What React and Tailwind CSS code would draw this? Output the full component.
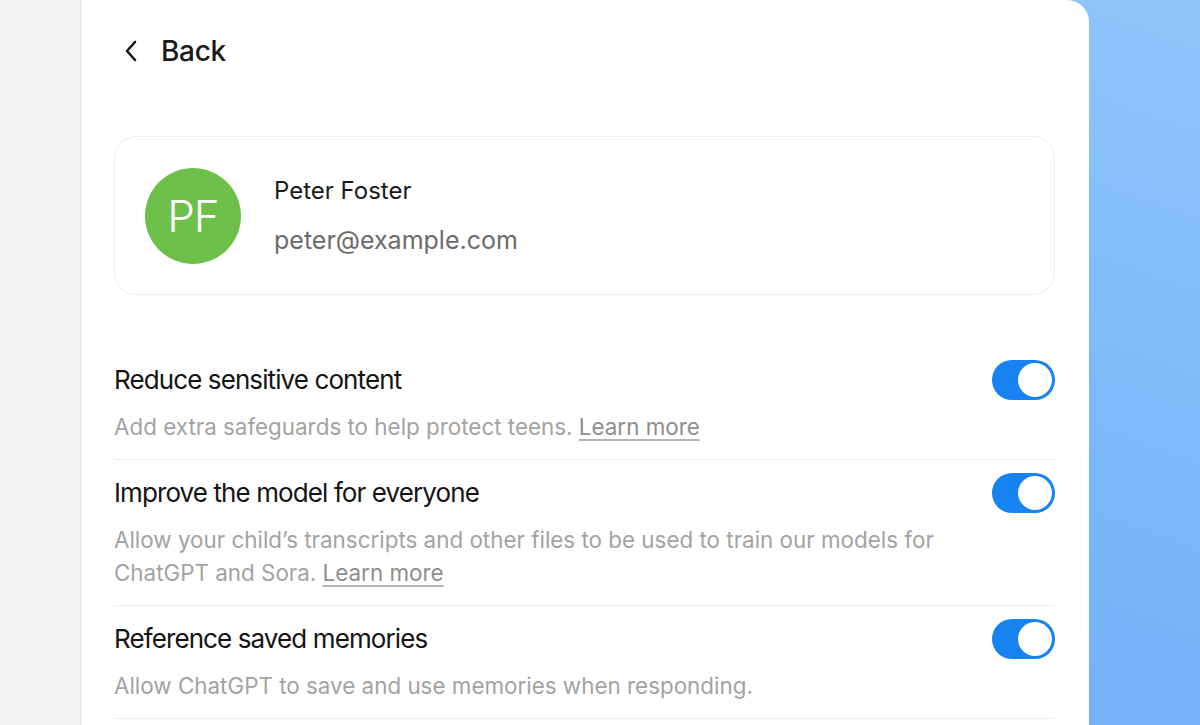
import React from "react";

function Toggle() {
  return (
    <div className="w-[63px] h-[40px] rounded-full bg-[#1683f0] p-[3px] flex justify-end shrink-0">
      <div className="w-[34px] h-[34px] rounded-full bg-white" />
    </div>
  );
}

function Row({ title, children }) {
  return (
    <div className="flex flex-col border-b border-[#ececec] pt-[13px] pb-[16px]">
      <div className="flex items-center justify-between">
        <div className="text-[26px] leading-[32px] text-[#141414] tracking-[-0.9px]">{title}</div>
        <Toggle />
      </div>
      <div className="mt-[10px] text-[22.4px] leading-[33px] text-[#a3a3a3] pr-[100px]">{children}</div>
    </div>
  );
}

function LearnMore() {
  return (
    <span className="text-[#8e8e8e] underline decoration-[#b5b5b5] decoration-[1.5px] underline-offset-[4px]">Learn more</span>
  );
}

export default function App() {
  return (
    <div
      className="w-[1200px] h-[725px] flex overflow-hidden bg-[linear-gradient(200deg,#8fc6fb_0%,#78b6f8_50%,#6fa6ee_100%)]"
      style={{ fontFamily: "Inter, 'Liberation Sans', sans-serif" }}
    >
      <div className="w-[81px] shrink-0 bg-[#f3f3f3] border-r border-[#e6e6e6]" />
      <div className="w-[1008px] shrink-0 bg-white rounded-tr-[22px] pl-[33px] pr-[34px] flex flex-col">
        <div className="flex items-center h-[40px] mt-[31px] pl-[9px]">
          <svg width="16" height="22" viewBox="0 0 16 22" fill="none" className="shrink-0">
            <path d="M12 2 L4 11 L12 20" stroke="#1a1a1a" strokeWidth="2.6" strokeLinecap="round" strokeLinejoin="round" />
          </svg>
          <span className="ml-[22px] text-[28px] font-medium text-[#1a1a1a] tracking-[-0.3px]">Back</span>
        </div>
        <div className="mt-[65px] h-[159px] rounded-[22px] border border-[#ececec] flex items-center pl-[30px]">
          <div className="w-[96px] h-[96px] rounded-full bg-[#6cc04a] flex items-center justify-center shrink-0">
            <span className="text-white text-[44px] font-light tracking-[-1px]">PF</span>
          </div>
          <div className="ml-[33px] flex flex-col">
            <div className="text-[24px] leading-[30px] text-[#1a1a1a]">Peter Foster</div>
            <div className="mt-[19px] text-[25px] leading-[30px] text-[#6b6b6b]">peter@example.com</div>
          </div>
        </div>
        <div className="mt-[52px] flex flex-col">
          <Row title="Reduce sensitive content">
            Add extra safeguards to help protect teens. <LearnMore />
          </Row>
          <Row title="Improve the model for everyone">
            Allow your child’s transcripts and other files to be used to train our models for ChatGPT and Sora. <LearnMore />
          </Row>
          <Row title="Reference saved memories">
            Allow ChatGPT to save and use memories when responding.
          </Row>
        </div>
      </div>
    </div>
  );
}
